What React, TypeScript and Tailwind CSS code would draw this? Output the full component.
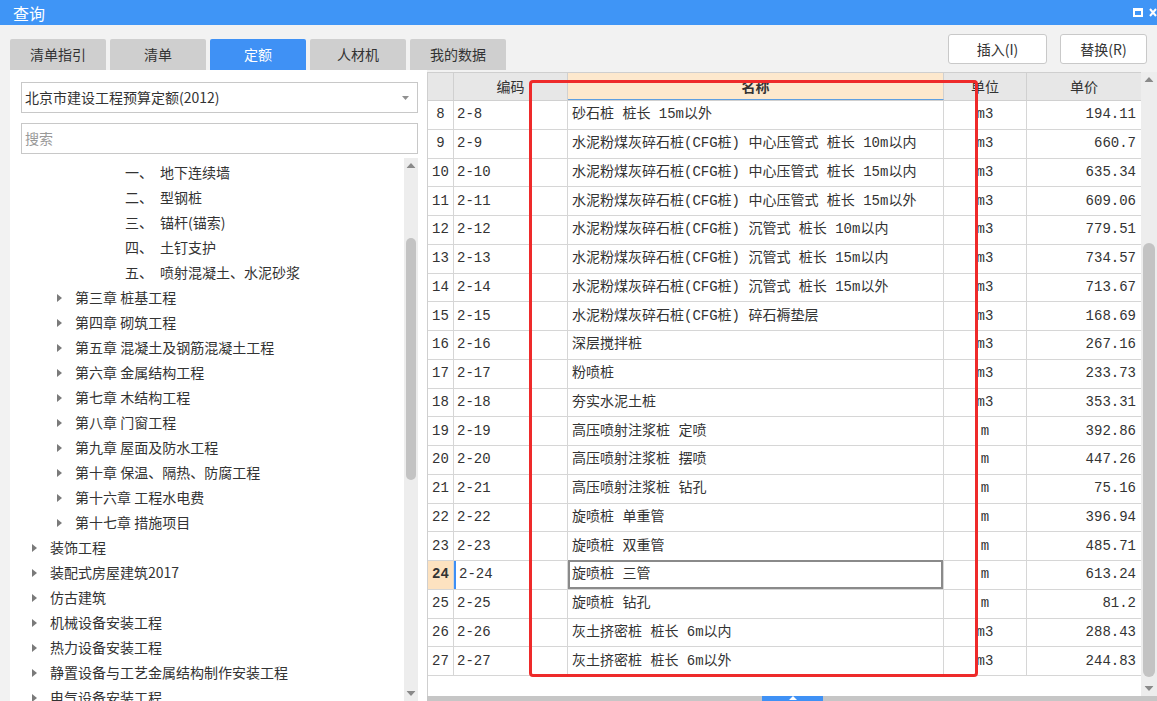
import React from "react";

const ROWS = [
  { n: 8, code: "2-8", name: "砂石桩 桩长 15m以外", unit: "m3", price: "194.11" },
  { n: 9, code: "2-9", name: "水泥粉煤灰碎石桩(CFG桩) 中心压管式 桩长 10m以内", unit: "m3", price: "660.7" },
  { n: 10, code: "2-10", name: "水泥粉煤灰碎石桩(CFG桩) 中心压管式 桩长 15m以内", unit: "m3", price: "635.34" },
  { n: 11, code: "2-11", name: "水泥粉煤灰碎石桩(CFG桩) 中心压管式 桩长 15m以外", unit: "m3", price: "609.06" },
  { n: 12, code: "2-12", name: "水泥粉煤灰碎石桩(CFG桩) 沉管式 桩长 10m以内", unit: "m3", price: "779.51" },
  { n: 13, code: "2-13", name: "水泥粉煤灰碎石桩(CFG桩) 沉管式 桩长 15m以内", unit: "m3", price: "734.57" },
  { n: 14, code: "2-14", name: "水泥粉煤灰碎石桩(CFG桩) 沉管式 桩长 15m以外", unit: "m3", price: "713.67" },
  { n: 15, code: "2-15", name: "水泥粉煤灰碎石桩(CFG桩) 碎石褥垫层", unit: "m3", price: "168.69" },
  { n: 16, code: "2-16", name: "深层搅拌桩", unit: "m3", price: "267.16" },
  { n: 17, code: "2-17", name: "粉喷桩", unit: "m3", price: "233.73" },
  { n: 18, code: "2-18", name: "夯实水泥土桩", unit: "m3", price: "353.31" },
  { n: 19, code: "2-19", name: "高压喷射注浆桩 定喷", unit: "m", price: "392.86" },
  { n: 20, code: "2-20", name: "高压喷射注浆桩 摆喷", unit: "m", price: "447.26" },
  { n: 21, code: "2-21", name: "高压喷射注浆桩 钻孔", unit: "m", price: "75.16" },
  { n: 22, code: "2-22", name: "旋喷桩 单重管", unit: "m", price: "396.94" },
  { n: 23, code: "2-23", name: "旋喷桩 双重管", unit: "m", price: "485.71" },
  { n: 24, code: "2-24", name: "旋喷桩 三管", unit: "m", price: "613.24" },
  { n: 25, code: "2-25", name: "旋喷桩 钻孔", unit: "m", price: "81.2" },
  { n: 26, code: "2-26", name: "灰土挤密桩 桩长 6m以内", unit: "m3", price: "288.43" },
  { n: 27, code: "2-27", name: "灰土挤密桩 桩长 6m以外", unit: "m3", price: "244.83" },
];

// level: 0 = 顶层, 1 = 章, 2 = 节
const TREE: { level: number; num?: string; text: string }[] = [
  { level: 2, num: "一、", text: "地下连续墙" },
  { level: 2, num: "二、", text: "型钢桩" },
  { level: 2, num: "三、", text: "锚杆(锚索)" },
  { level: 2, num: "四、", text: "土钉支护" },
  { level: 2, num: "五、", text: "喷射混凝土、水泥砂浆" },
  { level: 1, text: "第三章 桩基工程" },
  { level: 1, text: "第四章 砌筑工程" },
  { level: 1, text: "第五章 混凝土及钢筋混凝土工程" },
  { level: 1, text: "第六章 金属结构工程" },
  { level: 1, text: "第七章 木结构工程" },
  { level: 1, text: "第八章 门窗工程" },
  { level: 1, text: "第九章 屋面及防水工程" },
  { level: 1, text: "第十章 保温、隔热、防腐工程" },
  { level: 1, text: "第十六章 工程水电费" },
  { level: 1, text: "第十七章 措施项目" },
  { level: 0, text: "装饰工程" },
  { level: 0, text: "装配式房屋建筑2017" },
  { level: 0, text: "仿古建筑" },
  { level: 0, text: "机械设备安装工程" },
  { level: 0, text: "热力设备安装工程" },
  { level: 0, text: "静置设备与工艺金属结构制作安装工程" },
  { level: 0, text: "电气设备安装工程" },
];

const TABS = ["清单指引", "清单", "定额", "人材机", "我的数据"];

function Caret() {
  return (
    <svg width="5" height="8" viewBox="0 0 5 8" className="shrink-0">
      <path d="M0 0 L5 4 L0 8 Z" fill="#7a7a7a" />
    </svg>
  );
}

function TreeRow({ item }: { item: (typeof TREE)[number] }) {
  if (item.level === 2) {
    return (
      <div className="flex h-[25px] items-center pl-[104px]">
        <span className="w-[35px]">{item.num}</span>
        <span>{item.text}</span>
      </div>
    );
  }
  return (
    <div className={`flex h-[25px] items-center ${item.level === 1 ? "pl-[36px]" : "pl-[11px]"}`}>
      <span className="flex w-[18px] items-center">
        <Caret />
      </span>
      <span>{item.text}</span>
    </div>
  );
}

function VScroll({ thumbTop, thumbHeight, className }: { thumbTop: string; thumbHeight: string; className: string }) {
  return (
    <div className={`relative bg-[#ededed] ${className}`}>
      <svg width="9" height="5" viewBox="0 0 9 5" className="absolute left-1/2 top-[5px] -translate-x-1/2">
        <path d="M0 5 L4.5 0 L9 5 Z" fill="#8a8a8a" />
      </svg>
      <div className={`absolute left-[2px] right-[2px] rounded-full bg-[#c3c3c3] ${thumbTop} ${thumbHeight}`} />
      <svg width="9" height="5" viewBox="0 0 9 5" className="absolute bottom-[5px] left-1/2 -translate-x-1/2">
        <path d="M0 0 L4.5 5 L9 0 Z" fill="#8a8a8a" />
      </svg>
    </div>
  );
}

function TableRow({ r }: { r: (typeof ROWS)[number] }) {
  const sel = r.n === 24;
  return (
    <div className="flex h-[28.75px] shrink-0 border-b border-[#d6d6d6]">
      <div
        className={`flex w-[26px] items-center justify-center border-r border-[#d6d6d6] ${
          sel ? "bg-[#fde2c0] font-bold" : ""
        }`}
      >
        {r.n}
      </div>
      <div
        className={`flex w-[114px] items-center border-r border-[#d6d6d6] pl-[3px] ${
          sel ? "border-l-2 border-l-[#3d8ff5] pl-[1px]" : ""
        }`}
      >
        {r.code}
      </div>
      <div className="relative flex w-[376px] items-center border-r border-[#d6d6d6] pl-[4px]">
        {sel && <div className="absolute inset-x-0 -top-px bottom-0 border-2 border-[#8a8a8a]" />}
        {r.name}
      </div>
      <div className="flex w-[83px] items-center justify-center border-r border-[#d6d6d6]">{r.unit}</div>
      <div className="flex w-[114px] items-center justify-end pr-[5px]">{r.price}</div>
    </div>
  );
}

export default function App() {
  return (
    <div className="relative h-[701px] w-[1157px] overflow-hidden bg-[#f2f2f2] text-[14px] text-[#333] [font-family:'Noto_Sans_CJK_SC',sans-serif]">
      {/* 标题栏 */}
      <div className="flex h-[25px] items-center justify-between bg-[#3f95f6] pl-[13px] text-white">
        <span className="text-[16px] leading-none">查询</span>
        <div className="flex items-center gap-[6px] pr-0">
          <div className="h-[9px] w-[10px] border-2 border-t-[3px] border-white" />
          <svg width="8" height="9" viewBox="0 0 8 9">
            <path d="M1 1 L7 8 M7 1 L1 8" stroke="#fff" strokeWidth="2" />
          </svg>
        </div>
      </div>

      {/* 标签页 + 按钮 */}
      <div className="flex h-[45px] items-end justify-between pl-[10px] pr-[10px]">
        <div className="flex gap-[4px]">
          {TABS.map((t) => (
            <div
              key={t}
              className={`flex h-[31px] w-[96px] items-center justify-center rounded-t-[2px] ${
                t === "定额" ? "bg-[#3f91f5] text-white" : "bg-[#cfcfcf] text-[#333]"
              }`}
            >
              {t}
            </div>
          ))}
        </div>
        <div className="flex gap-[13px] self-start pt-[9px]">
          <button className="h-[30px] w-[99px] rounded-[3px] border border-[#c9c9c9] bg-white text-[#333]">插入(I)</button>
          <button className="h-[30px] w-[87px] rounded-[3px] border border-[#c9c9c9] bg-white text-[#333]">替换(R)</button>
        </div>
      </div>

      <div className="flex h-[631px]">
        {/* 左侧定额库 */}
        <div className="ml-[10px] flex w-[417px] flex-col bg-white pl-[11px] pr-[9px] pt-[12px]">
          <div className="flex h-[31px] items-center justify-between border border-[#c8c8c8] pl-[3px] pr-[8px]">
            <span>北京市建设工程预算定额(2012)</span>
            <svg width="7" height="4" viewBox="0 0 7 4">
              <path d="M0 0 L3.5 4 L7 0 Z" fill="#909090" />
            </svg>
          </div>
          <div className="mt-[10px] flex h-[31px] items-center border border-[#c8c8c8] pl-[3px] text-[#999]">搜索</div>
          <div className="mt-[4px] flex min-h-0 flex-1">
            <div className="flex-1 overflow-hidden pt-[2px]">
              {TREE.map((it) => (
                <TreeRow key={it.text} item={it} />
              ))}
            </div>
            <VScroll className="w-[14px]" thumbTop="top-[80px]" thumbHeight="h-[242px]" />
          </div>
        </div>

        {/* 右侧表格 */}
        <div className="flex flex-1 flex-col pt-[2px]">
          <div className="flex min-h-0 flex-1">
            <div className="flex flex-1 flex-col border-l border-t border-[#cfcfcf] bg-white [font-family:'Liberation_Mono','Noto_Sans_CJK_SC',monospace]">
              <div className="flex h-[28px] shrink-0 border-b border-[#d0d0d0] bg-[#e7e7e7] [font-family:'Noto_Sans_CJK_SC',sans-serif]">
                <div className="w-[26px] border-r border-[#d0d0d0]" />
                <div className="flex w-[114px] items-center justify-center border-r border-[#d0d0d0]">编码</div>
                <div className="flex w-[376px] items-center justify-center border-r border-b border-r-[#d0d0d0] border-b-[#5f9fe0] bg-[#fde8cd] font-bold">
                  名称
                </div>
                <div className="flex w-[83px] items-center justify-center border-r border-[#d0d0d0]">单位</div>
                <div className="flex w-[114px] items-center justify-center">单价</div>
              </div>
              {ROWS.map((r) => (
                <TableRow key={r.n} r={r} />
              ))}
            </div>
            <VScroll className="w-[16px]" thumbTop="top-[171px]" thumbHeight="h-[434px]" />
          </div>
          <div className="relative h-[5px] bg-[#c6c6c6]">
            <div className="absolute left-[335px] top-0 flex h-[5px] w-[61px] justify-center bg-[#3f91f5]">
              <svg width="8" height="4" viewBox="0 0 8 4">
                <path d="M0 4 L4 0 L8 4 Z" fill="#fff" />
              </svg>
            </div>
          </div>
        </div>
      </div>

      {/* 红色标注框 */}
      <div className="pointer-events-none absolute left-[529px] top-[80px] h-[597px] w-[449px] rounded-[4px] border-[3px] border-[#ee2a2a]" />
    </div>
  );
}
